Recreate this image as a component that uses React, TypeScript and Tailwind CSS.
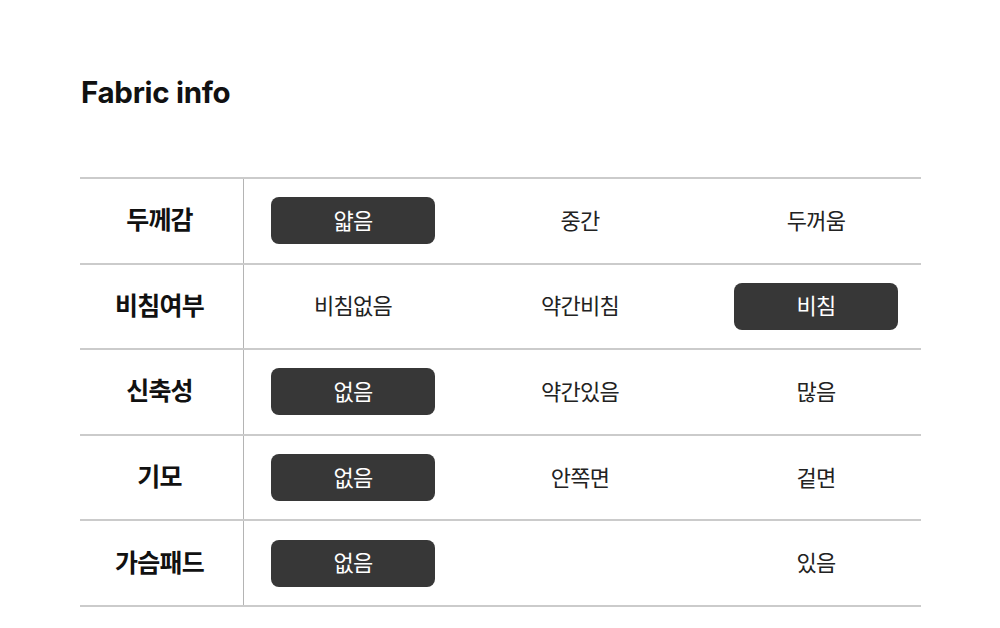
const rows = [
  { label: '두께감', options: ['얇음', '중간', '두꺼움'], selected: 0 },
  { label: '비침여부', options: ['비침없음', '약간비침', '비침'], selected: 2 },
  { label: '신축성', options: ['없음', '약간있음', '많음'], selected: 0 },
  { label: '기모', options: ['없음', '안쪽면', '겉면'], selected: 0 },
  { label: '가슴패드', options: ['없음', '', '있음'], selected: 0 },
]

const font = { fontFamily: 'Inter, "Noto Sans CJK KR", sans-serif' }

export default function App() {
  return (
    <div className="w-[1000px] h-[628px] bg-white" style={font}>
      <div className="pl-[81px] pt-[72px]">
        <h2 className="text-[29.5px] font-bold text-[#111] leading-[40px] tracking-[-0.3px]">Fabric info</h2>
      </div>
      <div className="ml-[80px] mt-[65px] w-[841px] border-t-2 border-[#cbcbcb]">
        {rows.map((row) => (
          <div key={row.label} className="flex h-[85.6px] border-b-2 border-[#cbcbcb]">
            <div className="w-[164px] flex items-center justify-center border-r border-[#b4b4b4]">
              <span className="text-[25px] font-bold text-[#111] tracking-[-0.8px] leading-none -ml-[4px]">{row.label}</span>
            </div>
            <div className="flex items-center pl-[27px]">
              {row.options.map((opt, i) => (
                <div
                  key={i}
                  className={
                    (i === 1 ? 'ml-[63px] ' : i === 2 ? 'ml-[72px] ' : '') +
                    (i === row.selected
                      ? 'w-[164px] h-[47px] rounded-[8px] bg-[#373737] text-white flex items-center justify-center'
                      : 'w-[164px] h-[47px] text-[#222] flex items-center justify-center')
                  }
                >
                  <span className="text-[22px] tracking-[-0.7px] leading-none">{opt}</span>
                </div>
              ))}
            </div>
          </div>
        ))}
      </div>
    </div>
  )
}
